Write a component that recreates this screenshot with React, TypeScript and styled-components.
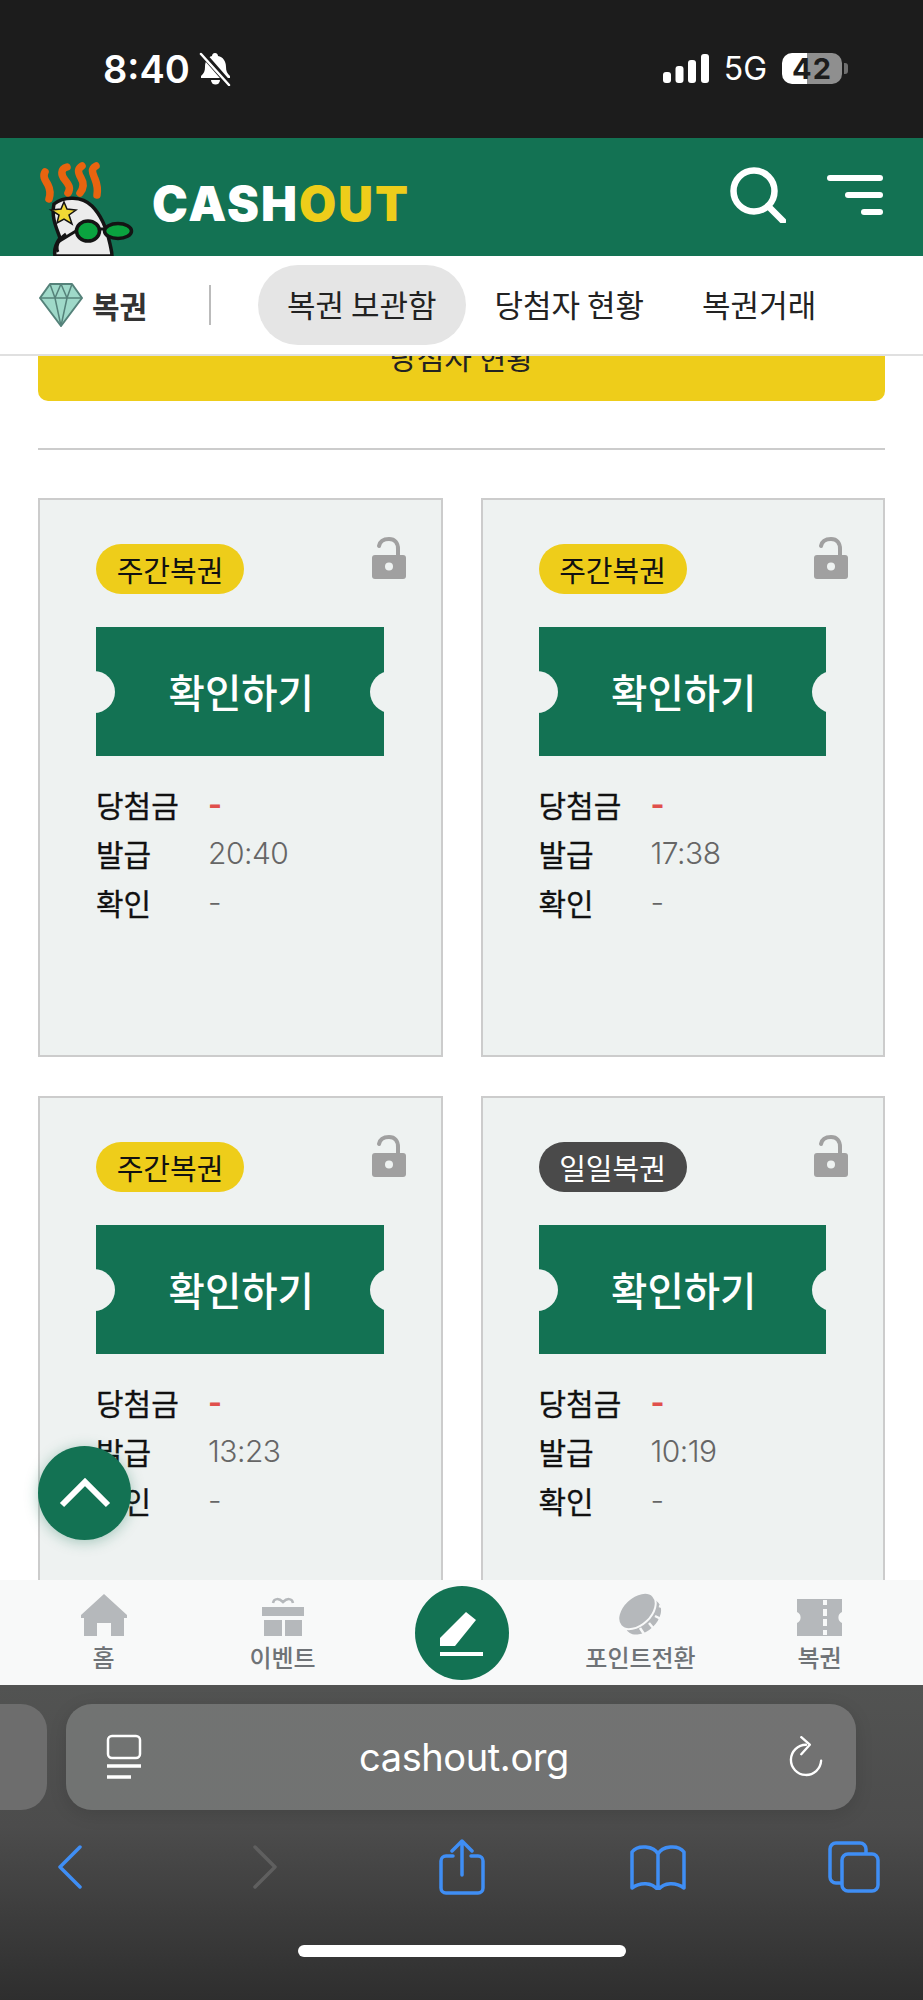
import React from "react";
import styled, { createGlobalStyle } from "styled-components";

const GlobalStyle = createGlobalStyle`
  html, body {
    margin: 0;
    padding: 0;
    background: #fff;
  }
  * {
    box-sizing: border-box;
  }
`;

const GREEN = "#137253";
const YELLOW = "#eecd1a";
const KR = `"Noto Sans CJK KR", "Noto Sans", sans-serif`;
const LATIN = `Inter, "Noto Sans CJK KR", sans-serif`;

type Ticket = {
  id: number;
  kind: "weekly" | "daily";
  issued: string;
};

const tickets: Ticket[] = [
  { id: 1, kind: "weekly", issued: "20:40" },
  { id: 2, kind: "weekly", issued: "17:38" },
  { id: 3, kind: "weekly", issued: "13:23" },
  { id: 4, kind: "daily", issued: "10:19" },
];

const App = () => {
  return (
    <Shell>
      <GlobalStyle />
      <StatusBar>
        <StatusLeft>
          <Clock>8:40</Clock>
          <svg width="33" height="34" viewBox="0 0 33 34">
            <path d="M16 1c2 0 3 1.500 3 3 5 1 8 5 8 11 0 4 1 6 4 9v2H2v-2c3-3 4-5 4-9 0-6 3-10 7-11 0-1.500 1-3 3-3z" fill="#fff" />
            <path d="M12 28h9a4.500 4.500 0 0 1-9 0z" fill="#fff" />
            <path d="M3 1l28 32" stroke="#1c1c1c" strokeWidth="6" />
            <path d="M2 2l28 31" stroke="#fff" strokeWidth="2.500" strokeLinecap="round" />
          </svg>
        </StatusLeft>
        <StatusRight>
          <svg width="46" height="29" viewBox="0 0 46 29" fill="#fff">
            <rect x="0" y="18" width="8" height="11" rx="3" />
            <rect x="12.500" y="12" width="8" height="17" rx="3" />
            <rect x="25" y="6" width="8" height="23" rx="3" />
            <rect x="38" y="0" width="8" height="29" rx="3" />
          </svg>
          <NetLabel>5G</NetLabel>
          <Battery>
            <BatteryText>42</BatteryText>
          </Battery>
        </StatusRight>
      </StatusBar>

      <Header>
        <Brand>
          <SoftIcon $blur={0.4}>
            <svg width="97" height="96" viewBox="0 0 97 96">
              <g fill="none" stroke="#e8640f" strokeWidth="7.500" strokeLinecap="round">
                <path d="M7 12c-3 5 1 9 3 13s3 8 1 14" />
                <path d="M29 7c-7 2-6 8-2 13s6 8 3 13" />
                <path d="M44 6c-5 3-4 7-1 12s3 10-1 15" />
                <path d="M58 6c-6 3-3 8-1 13s3 10 2 16" />
              </g>
              <path d="M16 44C26 36 44 36 54 46c9 9 15 24 18 38 1 5 2 8 2 12H17c-1-5 0-11 5-18-3-9-9-20-6-34z" fill="#ececec" stroke="#141414" strokeWidth="3.500" />
              <path d="M20 92c-3-6 1-13 8-18" fill="none" stroke="#141414" strokeWidth="3" />
              <polygon points="26,42 29,49 38,50 31,55 34,64 26,59 19,63 21,55 13,50 23,49" fill="#f2d935" stroke="#141414" strokeWidth="1.500" />
              <path d="M20 82l18-11" stroke="#141414" strokeWidth="3" />
              <ellipse cx="50" cy="71" rx="11.500" ry="10" fill="#0aa33f" stroke="#141414" strokeWidth="3.500" />
              <ellipse cx="80" cy="71" rx="13.500" ry="7.500" fill="#0aa33f" stroke="#141414" strokeWidth="3.500" />
              <path d="M61 69h6" stroke="#141414" strokeWidth="3" />
            </svg>
          </SoftIcon>
          <LogoText>
            CASH<span>OUT</span>
          </LogoText>
        </Brand>
        <HeaderActions>
          <svg width="56" height="56" viewBox="0 0 56 56" fill="none" stroke="#fff" strokeWidth="6.500" strokeLinecap="round">
            <circle cx="24" cy="24" r="20.500" />
            <path d="M38 39l15 15" />
          </svg>
          <Burger>
            <BurgerLine $width={56} />
            <BurgerLine $width={38} />
            <BurgerLine $width={22} />
          </Burger>
        </HeaderActions>
      </Header>

      <SubNav>
        <SubNavTitle>
          <SoftIcon $blur={0.5}>
            <svg width="44" height="44" viewBox="0 0 44 44">
              <polygon points="11,1 33,1 43,15 22,43 1,15" fill="#9fd9c9" stroke="#55827a" strokeWidth="2" strokeLinejoin="round" />
              <path d="M1 15h42M11 1l5 14 6 28 6-28 5-14M16 15l6-14 6 14" fill="none" stroke="#55827a" strokeWidth="1.500" />
            </svg>
          </SoftIcon>
          복권
        </SubNavTitle>
        <SubNavDivider />
        <SubNavTabs>
          <SubNavTab $active>복권 보관함</SubNavTab>
          <SubNavTab>당첨자 현황</SubNavTab>
          <SubNavTab>복권거래</SubNavTab>
        </SubNavTabs>
      </SubNav>

      <Main>
        <WinnerButton>당첨자 현황</WinnerButton>
        <Rule />
        <TicketGrid>
          {tickets.map((t) => (
            <TicketCard key={t.id}>
              <LockMark viewBox="0 0 34 42">
                <path d="M7 9C8 4 12 2 17 2c6 0 9 4 9 10v7" fill="none" stroke="#a0a0a0" strokeWidth="4" strokeLinecap="round" />
                <rect x="0" y="18" width="34" height="24" rx="3" fill="#a0a0a0" />
                <circle cx="17" cy="29.500" r="4" fill="#eef2f1" />
              </LockMark>
              <KindPill $kind={t.kind}>{t.kind === "weekly" ? "주간복권" : "일일복권"}</KindPill>
              <TicketStub>확인하기</TicketStub>
              <InfoList>
                <InfoRow>
                  <InfoLabel>당첨금</InfoLabel>
                  <InfoValue $accent>-</InfoValue>
                </InfoRow>
                <InfoRow>
                  <InfoLabel>발급</InfoLabel>
                  <InfoValue>{t.issued}</InfoValue>
                </InfoRow>
                <InfoRow>
                  <InfoLabel>확인</InfoLabel>
                  <InfoValue>-</InfoValue>
                </InfoRow>
              </InfoList>
            </TicketCard>
          ))}
        </TicketGrid>
      </Main>

      <ScrollTop>
        <svg width="52" height="30" viewBox="0 0 52 30" fill="none" stroke="#fff" strokeWidth="6">
          <path d="M3 27L26 4l23 23" />
        </svg>
      </ScrollTop>

      <BottomNav>
        <BottomItem>
          <SoftIcon $blur={0.6} $height={44}>
            <svg width="46" height="42" viewBox="0 0 46 42" fill="#b5b8bb">
              <path d="M23 0l23 21v3h-3v18H30V29H16v13H3V24H0v-3z" />
            </svg>
          </SoftIcon>
          <BottomLabel>홈</BottomLabel>
        </BottomItem>
        <BottomItem>
          <SoftIcon $blur={0.6} $height={44}>
            <svg width="42" height="40" viewBox="0 0 42 40" fill="#b5b8bb">
              <path d="M11 7c1-5 6-5 10-1 4-4 9-4 10 1" fill="none" stroke="#b5b8bb" strokeWidth="2.500" />
              <rect x="0" y="11" width="42" height="9" />
              <rect x="2" y="24" width="18" height="16" />
              <rect x="23" y="24" width="17" height="16" />
            </svg>
          </SoftIcon>
          <BottomLabel>이벤트</BottomLabel>
        </BottomItem>
        <BottomItem>
          <WriteButton>
            <svg width="43" height="45" viewBox="0 0 43 45" fill="#fff">
              <polygon points="26,1 36,9 15,35 0,35 0,27" />
              <rect x="0" y="41" width="43" height="4" />
            </svg>
          </WriteButton>
        </BottomItem>
        <BottomItem>
          <SoftIcon $blur={0.6} $height={44}>
            <svg width="45" height="44" viewBox="0 0 45 44">
              <ellipse cx="25" cy="25" rx="21" ry="14" transform="rotate(-43 25 25)" fill="#b5b8bb" />
              <path d="M22 36l4 6M31 31l5 6M37 24l6 3M41 14l4 1" stroke="#f8f9f9" strokeWidth="2.500" />
              <ellipse cx="19" cy="19" rx="22" ry="14" transform="rotate(-43 19 19)" fill="#b5b8bb" stroke="#f8f9f9" strokeWidth="2" />
            </svg>
          </SoftIcon>
          <BottomLabel>포인트전환</BottomLabel>
        </BottomItem>
        <BottomItem>
          <SoftIcon $blur={0.6} $height={44}>
            <svg width="45" height="37" viewBox="0 0 45 37">
              <path d="M0 0h45v13a6 6 0 0 0 0 11v13H0V24a6 6 0 0 0 0-11z" fill="#b5b8bb" />
              <path d="M28 1v5M28 10v7M28 20v7M28 31v5" stroke="#f8f9f9" strokeWidth="4" />
            </svg>
          </SoftIcon>
          <BottomLabel>복권</BottomLabel>
        </BottomItem>
      </BottomNav>

      <Browser>
        <AddressRow>
          <PrevTab />
          <AddressBar>
            <svg width="36" height="46" viewBox="0 0 36 46" fill="none" stroke="#fff" strokeWidth="2.500">
              <rect x="2" y="2" width="32" height="22" rx="4" />
              <path d="M1 32h34" strokeWidth="3.500" />
              <path d="M1 43h24" strokeWidth="3.500" />
            </svg>
            <AddressText>cashout.org</AddressText>
            <svg width="34" height="42" viewBox="0 0 36 44" fill="none" stroke="#fff" strokeWidth="2.500" strokeLinecap="round" strokeLinejoin="round">
              <path d="M18 9a16 16 0 1 0 16 17" />
              <path d="M13 1l9 8-9 10" />
            </svg>
          </AddressBar>
        </AddressRow>
        <ToolRow>
          <svg width="25" height="44" viewBox="0 0 25 44" fill="none" stroke="#3f8ef5" strokeWidth="3.500" strokeLinecap="round" strokeLinejoin="round">
            <path d="M23 2L3 22l20 20" />
          </svg>
          <svg width="25" height="44" viewBox="0 0 25 44" fill="none" stroke="#5f5f5f" strokeWidth="3.500" strokeLinecap="round" strokeLinejoin="round">
            <path d="M2 2l20 20L2 42" />
          </svg>
          <svg width="46" height="56" viewBox="0 0 46 56" fill="none" stroke="#3f8ef5" strokeWidth="3.500" strokeLinecap="round" strokeLinejoin="round">
            <path d="M14 17H7a5 5 0 0 0-5 5v27a5 5 0 0 0 5 5h32a5 5 0 0 0 5-5V22a5 5 0 0 0-5-5h-7" />
            <path d="M23 36V3M13 12l10-10 10 10" />
          </svg>
          <svg width="56" height="46" viewBox="0 0 56 46" fill="none" stroke="#3f8ef5" strokeWidth="3.500" strokeLinejoin="round">
            <path d="M28 10C24 2 8 0 2 8v36c8-6 20-6 26 2 6-8 18-8 26-2V8C48 0 32 2 28 10zM28 10v36" />
          </svg>
          <svg width="52" height="52" viewBox="0 0 52 52" fill="none" stroke="#3f8ef5" strokeWidth="3.500">
            <path d="M13 42H8a6 6 0 0 1-6-6V8a6 6 0 0 1 6-6h24a6 6 0 0 1 6 6v4" />
            <rect x="14" y="13" width="36" height="37" rx="6" />
          </svg>
        </ToolRow>
        <HomeBar />
      </Browser>
    </Shell>
  );
};

export default App;

//styled-components

const Shell = styled.div`
  position: relative;
  width: 923px;
  height: 2000px;
  display: flex;
  flex-direction: column;
  overflow: hidden;
  font-family: ${KR};
  color: #111;
`;

const SoftIcon = styled.span<{ $blur: number; $height?: number }>`
  display: flex;
  align-items: flex-end;
  justify-content: center;
  filter: blur(${(p) => p.$blur}px);
  ${(p) => (p.$height ? `height: ${p.$height}px;` : "")}
`;

const StatusBar = styled.div`
  flex: 0 0 138px;
  background: #1c1c1c;
  display: flex;
  justify-content: space-between;
  align-items: flex-start;
  padding: 52px 81px 0 103px;
  color: #fff;
`;

const StatusLeft = styled.div`
  display: flex;
  align-items: center;
  gap: 9px;
`;

const Clock = styled.span`
  font: 600 38px/34px ${LATIN};
`;

const StatusRight = styled.div`
  display: flex;
  align-items: center;
  height: 33px;
  gap: 15px;
`;

const NetLabel = styled.span`
  font: 400 32px/33px ${LATIN};
`;

const Battery = styled.div`
  position: relative;
  width: 60px;
  height: 31px;
  border-radius: 10px;
  background: linear-gradient(90deg, #fff 0 25px, #8f8f8f 25px);
  display: flex;
  align-items: center;
  justify-content: center;

  &::after {
    content: "";
    position: absolute;
    right: -6px;
    top: 10px;
    width: 4px;
    height: 11px;
    border-radius: 0 3px 3px 0;
    background: #6f6f6f;
  }
`;

const BatteryText = styled.span`
  font: 700 29px/31px ${LATIN};
  letter-spacing: 1px;
  color: #1c1c1c;
`;

const Header = styled.header`
  flex: 0 0 118px;
  background: ${GREEN};
  display: flex;
  justify-content: space-between;
  padding: 22px 40px 0 38px;
`;

const Brand = styled.div`
  display: flex;
  align-items: flex-end;
  gap: 17px;
  height: 96px;
`;

const LogoText = styled.div`
  font: 900 48px/1 ${LATIN};
  letter-spacing: 2px;
  color: #fff;
  align-self: center;
  margin-top: -9px;

  span {
    color: ${YELLOW};
  }
`;

const HeaderActions = styled.div`
  display: flex;
  align-items: flex-start;
  gap: 41px;
  padding-top: 7px;
`;

const Burger = styled.div`
  width: 56px;
  display: flex;
  flex-direction: column;
  align-items: flex-end;
  gap: 11px;
  padding-top: 8px;
`;

const BurgerLine = styled.i<{ $width: number }>`
  display: block;
  height: 6px;
  width: ${(p) => p.$width}px;
  background: #fff;
  border-radius: 3px;
`;

const SubNav = styled.nav`
  flex: 0 0 100px;
  position: relative;
  z-index: 2;
  background: #fff;
  border-bottom: 2px solid #e0e0e0;
  display: flex;
  align-items: center;
  padding: 0 0 0 39px;
`;

const SubNavTitle = styled.div`
  display: flex;
  align-items: center;
  gap: 9px;
  width: 170px;
  font-size: 30px;
  font-weight: 700;
  color: #333;
`;

const SubNavDivider = styled.div`
  width: 2px;
  height: 40px;
  background: #bbb;
`;

const SubNavTabs = styled.div`
  display: flex;
  align-items: center;
  margin-left: 47px;
`;

const SubNavTab = styled.div<{ $active?: boolean }>`
  height: 80px;
  display: flex;
  align-items: center;
  justify-content: center;
  padding: 0 29px 4px;
  border-radius: 40px;
  font-size: 31px;
  color: #222;
  white-space: nowrap;
  background: ${(p) => (p.$active ? "#e5e5e5" : "transparent")};
`;

const Main = styled.main`
  flex: 1;
  min-height: 0;
  overflow: hidden;
  padding: 0 38px;
`;

const WinnerButton = styled.div`
  height: 80px;
  margin-top: -35px;
  padding-bottom: 10px;
  background: ${YELLOW};
  border-radius: 10px;
  display: flex;
  align-items: center;
  justify-content: center;
  font-size: 30px;
  color: #222;
`;

const Rule = styled.hr`
  height: 2px;
  margin: 47px 0 48px;
  border: 0;
  background: #ccc;
`;

const TicketGrid = styled.div`
  display: grid;
  grid-template-columns: 1fr 1fr;
  column-gap: 38px;
  row-gap: 39px;
`;

const TicketCard = styled.article`
  position: relative;
  height: 559px;
  border: 2px solid #ccc;
  background: #eef2f1;
  padding: 44px 57px 0 56px;
`;

const LockMark = styled.svg`
  position: absolute;
  top: 37px;
  right: 35px;
  width: 34px;
  height: 42px;
`;

const KindPill = styled.div<{ $kind: "weekly" | "daily" }>`
  width: 148px;
  height: 50px;
  border-radius: 25px;
  display: flex;
  align-items: center;
  justify-content: center;
  font-size: 29px;
  background: ${(p) => (p.$kind === "weekly" ? YELLOW : "#4a4a4a")};
  color: ${(p) => (p.$kind === "weekly" ? "#111" : "#fff")};
`;

const TicketStub = styled.div`
  position: relative;
  height: 129px;
  margin-top: 33px;
  padding: 0 0 2px 3px;
  background: ${GREEN};
  color: #fff;
  display: flex;
  align-items: center;
  justify-content: center;
  font-size: 39.500px;
  font-weight: 500;

  &::before,
  &::after {
    content: "";
    position: absolute;
    top: 44px;
    width: 42px;
    height: 42px;
    border-radius: 50%;
    background: #eef2f1;
  }
  &::before {
    left: -23px;
  }
  &::after {
    right: -28px;
  }
`;

const InfoList = styled.div`
  margin-top: 23px;
`;

const InfoRow = styled.div`
  display: flex;
  height: 49px;
  align-items: center;
`;

const InfoLabel = styled.span`
  width: 112px;
  font-size: 30px;
  color: #111;
  -webkit-text-stroke: 0.3px #111;
`;

const InfoValue = styled.span<{ $accent?: boolean }>`
  font: ${(p) => (p.$accent ? 700 : 300)} 30px/1 ${LATIN};
  letter-spacing: -0.5px;
  color: ${(p) => (p.$accent ? "#e0504c" : "#666")};
`;

const ScrollTop = styled.div`
  position: absolute;
  left: 38px;
  top: 1446px;
  width: 93px;
  height: 94px;
  border-radius: 50%;
  background: ${GREEN};
  box-shadow: 0 2px 14px rgba(19, 114, 83, 0.35);
  display: flex;
  align-items: center;
  justify-content: center;
  z-index: 3;
`;

const BottomNav = styled.nav`
  flex: 0 0 105px;
  background: #f8f9f9;
  display: grid;
  grid-template-columns: repeat(5, 1fr);
  padding: 0 14px;
`;

const BottomItem = styled.div`
  display: flex;
  flex-direction: column;
  align-items: center;
  justify-content: flex-start;
  padding-top: 12px;
  gap: 7px;
`;

const BottomLabel = styled.span`
  font-size: 24px;
  line-height: 28px;
  font-weight: 500;
  color: #6f7377;
`;

const WriteButton = styled.div`
  width: 94px;
  height: 94px;
  margin-top: -6px;
  border-radius: 50%;
  background: ${GREEN};
  display: flex;
  align-items: center;
  justify-content: center;
`;

const Browser = styled.div`
  flex: 0 0 315px;
  background: linear-gradient(180deg, #525352 0%, #4c4c4c 45%, #2e2e2e 100%);
  display: flex;
  flex-direction: column;
  align-items: stretch;
  padding-top: 19px;
`;

const AddressRow = styled.div`
  display: flex;
  gap: 19px;
  height: 106px;
`;

const PrevTab = styled.div`
  width: 47px;
  background: #6d6d6d;
  border-radius: 0 26px 26px 0;
`;

const AddressBar = styled.div`
  width: 790px;
  background: linear-gradient(90deg, #717372, #727272);
  border-radius: 26px;
  display: flex;
  align-items: center;
  justify-content: space-between;
  padding: 0 33px 0 40px;
  box-shadow: 0 4px 18px rgba(0, 0, 0, 0.12);
`;

const AddressText = styled.span`
  font: 400 38px/1 ${LATIN};
  letter-spacing: -0.4px;
  margin-left: -3px;
  color: #fff;
`;

const ToolRow = styled.div`
  display: grid;
  grid-template-columns: repeat(5, 196px);
  justify-content: center;
  justify-items: center;
  align-items: center;
  height: 56px;
  margin-top: 29px;
`;

const HomeBar = styled.div`
  width: 328px;
  height: 12px;
  border-radius: 6px;
  background: #fff;
  margin: 50px auto 0;
`;
